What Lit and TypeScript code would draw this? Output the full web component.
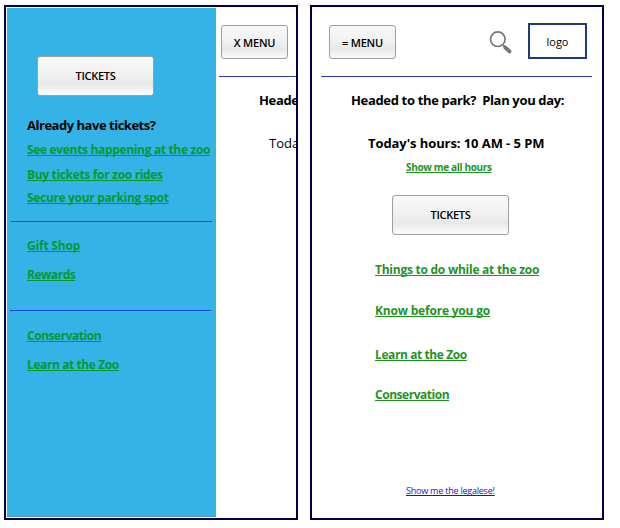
import { LitElement, html, css } from "lit";
import { customElement, property } from "lit/decorators.js";

@customElement("menu-header")
class MenuHeader extends LitElement {
  @property() label = "";

  static styles = css`
    :host { display: block; border-bottom: 1px solid #2b3bb4; padding: 11px 0 0; height: 54px; }
    .row { display: flex; align-items: flex-start; }
    button {
      box-sizing: border-box; width: 67px; height: 34px; padding: 2px 0 0; margin: 3px 0 0 var(--inset, 2px);
      border: 1px solid #a39d97; border-radius: 3px; flex: none;
      background: linear-gradient(#f9f9f9, #f1f1f1 45%, #e8e8e8 72%, #fbfbfb);
      font: 600 11px/16px "Open Sans", "Noto Sans", sans-serif; color: #000; letter-spacing: -0.2px;
    }
  `;

  render() {
    return html`<div class="row"><button>${this.label}</button><slot></slot></div>`;
  }
}

@customElement("app-root")
class AppRoot extends LitElement {
  static styles = css`
    :host {
      display: flex; gap: 12px; box-sizing: border-box; width: 620px; height: 528px; padding: 5px 0 0 4px;
      background: #fff; color: #000; overflow: hidden;
      font: 700 12px/16px "Open Sans", "Noto Sans", sans-serif; white-space: pre;
    }
    .phone { box-sizing: border-box; width: 294px; height: 515px; border: 2px solid #00004f; overflow: hidden; flex: none; }
    .open { display: flex; padding: 1px 0 0 1px; }
    .drawer {
      box-sizing: border-box; width: 209px; height: 509px; flex: none; background: #34b4e6;
      border-bottom: 1px solid #4a9cc4; display: flex; flex-direction: column; align-items: flex-start;
    }
    .under { width: 78px; flex: none; overflow: hidden; margin: -1px 0 0 3px; padding-top: 4px; }
    .under .head { margin-left: 40px; }
    .under .plain { margin-left: 50px; font-weight: 400; letter-spacing: 0; }
    .main { display: flex; flex-direction: column; padding: 4px 0 0 9px; }
    .main menu-header { --inset: 8px; width: 271px; }
    .tickets {
      box-sizing: border-box; width: 117px; height: 40px; padding: 0; border: 1px solid #a39d97; border-radius: 3px;
      background: linear-gradient(#fafafa, #f1f1f1 45%, #e8e8e8 72%, #fdfdfd);
      font: 600 11px/16px "Open Sans", "Noto Sans", sans-serif; color: #000; letter-spacing: -0.3px;
    }
    .drawer .tickets { margin: 48px 0 0 30px; }
    .head { font-size: 13px; height: 16px; letter-spacing: -0.34px; }
    .drawer .head { letter-spacing: -0.48px; }
    .main .head { margin-left: 30px; }
    .main .head.today { margin-left: 47px; letter-spacing: -0.08px; }
    a {
      display: block; height: 16px; color: #06992f; width: max-content; letter-spacing: -0.4px;
      text-decoration: underline; text-underline-offset: 1px; text-decoration-thickness: 1px; text-decoration-skip-ink: none;
    }
    a.loose { letter-spacing: -0.33px; }
    a.looser { letter-spacing: -0.25px; }
    a.loosest { letter-spacing: -0.2px; }
    a.tight { letter-spacing: -0.47px; }
    .drawer a, .drawer .head { margin-left: 20px; }
    .rule { width: 201px; height: 1px; background: #1b49d6; margin-left: 4px; }
    .rule.second { margin-left: 3px; margin-top: 27px; }
    .main a { color: #1f941f; margin-left: 54px; }
    .main a.hours { font-size: 10px; margin: 8px 0 0 85px; letter-spacing: -0.34px; }
    .main a.legal { font-size: 9px; font-weight: 400; color: #1414cc; margin: 80px 0 0 85px; letter-spacing: -0.22px; }
    .main .tickets { margin: 20px 0 0 71px; }
    .logo {
      box-sizing: border-box; width: 59px; height: 36px; border: 2px solid #1f3a80; margin: 1px 0 0 15px;
      font-size: 11px; font-weight: 400; line-height: 34px; text-align: center;
    }
    .search { display: block; width: 24px; height: 24px; margin: 9px 0 0 93px; }
    .t7 { margin-top: 7px; } .t9 { margin-top: 9px; } .t13 { margin-top: 13px; } .t15 { margin-top: 15px; }
    .t16 { margin-top: 16px; } .t17 { margin-top: 17px; } .t21 { margin-top: 21px; } .t24 { margin-top: 24px; }
    .t25 { margin-top: 25px; } .t27 { margin-top: 27px; } .t28 { margin-top: 28px; }
  `;

  render() {
    return html`
      <section class="phone open"><nav class="drawer"><button class="tickets">TICKETS</button
        ><div class="head t21">Already have tickets?</div
        ><a class="t9 loose">See events happening at the zoo</a
        ><a class="t9 loose">Buy tickets for zoo rides</a
        ><a class="t7 loose">Secure your parking spot</a
        ><div class="rule t15"></div
        ><a class="t16 loosest">Gift Shop</a
        ><a class="t13 tight">Rewards</a
        ><div class="rule second"></div
        ><a class="t17 tight">Conservation</a
        ><a class="t13">Learn at the Zoo</a
      ></nav><div class="under"><menu-header label="X MENU"></menu-header
        ><div class="head t15">Heade</div
        ><div class="head plain t27">Toda</div
      ></div></section><section class="phone main"><menu-header label="= MENU"
        ><svg class="search" viewBox="0 0 24 24"><path d="M14 14l3 3" stroke="#777" stroke-width="1.8"/><path d="M16.4 16.6l4 3.8" stroke="#777" stroke-width="4" stroke-linecap="round"/><circle cx="8.8" cy="8.2" r="7.3" fill="#fff" stroke="#777" stroke-width="1.7"/></svg
        ><div class="logo">logo</div></menu-header
        ><div class="head t15">Headed to the park?  Plan you day:</div
        ><div class="head today t27">Today's hours: 10 AM - 5 PM</div
        ><a class="hours">Show me all hours</a
        ><button class="tickets">TICKETS</button
        ><a class="t27 looser">Things to do while at the zoo</a
        ><a class="t25 loosest">Know before you go</a
        ><a class="t28">Learn at the Zoo</a
        ><a class="t24 tight">Conservation</a
        ><a class="legal">Show me the legalese!</a
      ></section>`;
  }
}
